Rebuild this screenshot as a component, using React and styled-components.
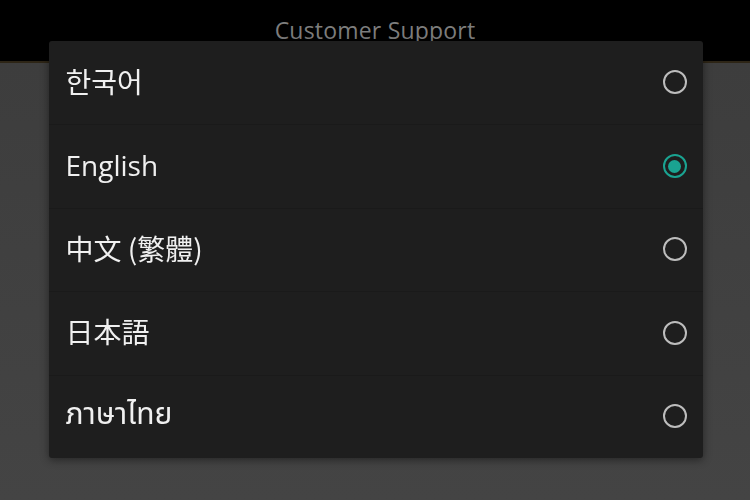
import React, { useState } from 'react';
import styled, { createGlobalStyle } from 'styled-components';

const GlobalStyle = createGlobalStyle`
  html, body {
    margin: 0;
    padding: 0;
    background: #404040;
    font-family: "Open Sans", "Noto Sans", "Noto Sans CJK KR", sans-serif;
  }
`;

const languages = [
  { id: 'ko', label: '한국어', font: '"Noto Sans CJK KR"' },
  { id: 'en', label: 'English', font: '"Open Sans"' },
  { id: 'zh', label: '中文 (繁體)', font: '"Noto Sans CJK TC"' },
  { id: 'ja', label: '日本語', font: '"Noto Sans CJK JP"' },
  { id: 'th', label: 'ภาษาไทย', font: '"Noto Sans Thai", "Noto Sans"' },
];

const Page = () => {
  const [lang, setLang] = useState('en');
  return (
    <Screen>
      <GlobalStyle />
      <Header>
        <Title>Customer Support</Title>
      </Header>
      <Body />
      <Overlay>
        <Dialog>
          {languages.map((l) => (
            <Row key={l.id} onClick={() => setLang(l.id)}>
              <Label $font={l.font} $wide={l.id === 'th'}>{l.label}</Label>
              <Radio $checked={lang === l.id} />
            </Row>
          ))}
        </Dialog>
      </Overlay>
    </Screen>
  );
};

const Screen = styled.div`
  width: 750px;
  height: 500px;
  display: flex;
  flex-direction: column;
  background: #404040;
`;

const Header = styled.div`
  height: 61px;
  background: #000;
  border-bottom: 2px solid #2d2516;
  display: flex;
  justify-content: center;
  align-items: flex-start;
`;

const Title = styled.div`
  margin-top: 14px;
  font-family: "Open Sans", sans-serif;
  font-size: 23px;
  color: #7d7d7d;
  letter-spacing: 0.2px;
`;

const Body = styled.div`
  flex: 1;
  background: linear-gradient(180deg, #3d3d3d 0%, #444 100%);
`;

const Overlay = styled.div`
  position: fixed;
  inset: 0;
  display: flex;
  justify-content: center;
  align-items: flex-start;
  padding-top: 41px;
  padding-left: 1px;
`;

const Dialog = styled.div`
  width: 654px;
  background: #1e1e1e;
  border-radius: 3px;
  box-shadow: 0 2px 8px rgba(0, 0, 0, 0.45);
  display: flex;
  flex-direction: column;
  overflow: hidden;
`;

const Row = styled.div`
  height: 83.4px;
  padding: 0 16px 0 17px;
  display: flex;
  align-items: center;
  justify-content: space-between;
  border-top: 1px solid #1a1a1a;
  box-sizing: border-box;
  cursor: pointer;

  &:first-child {
    border-top: none;
  }
`;

const Label = styled.span`
  margin-bottom: 4px;
  font-family: ${(p) => p.$font}, "Noto Sans CJK KR", sans-serif;
  font-size: ${(p) => (p.$wide ? '30px' : '28px')};
  color: #f0f0f0;
`;

const Radio = styled.span`
  width: 20px;
  height: 20px;
  margin-bottom: 1px;
  border-radius: 50%;
  border: 2.5px solid ${(p) => (p.$checked ? '#1aa391' : '#bdbdbd')};
  position: relative;

  &::after {
    content: '';
    display: ${(p) => (p.$checked ? 'block' : 'none')};
    position: absolute;
    inset: 3.5px;
    border-radius: 50%;
    background: #1aa391;
  }
`;

export default Page;
